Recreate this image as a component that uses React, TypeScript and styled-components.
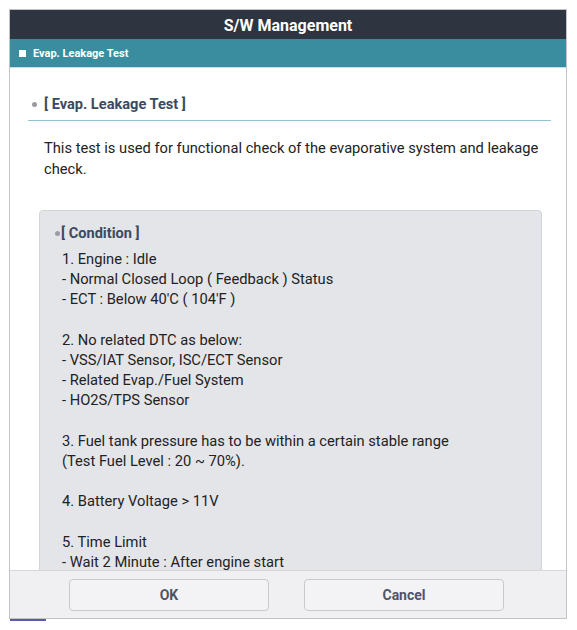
import React from 'react';
import styled, {createGlobalStyle} from 'styled-components';

const GlobalStyle = createGlobalStyle`
  body {
    margin: 0;
    background: #ffffff;
    font-family: Roboto, "Liberation Sans", Arial, sans-serif;
  }
`;

const Page = styled.div`
  padding: 9px 0 0 9px;
`;

const Dialog = styled.div`
  width: 558px;
  height: 610px;
  display: flex;
  flex-direction: column;
  border: 1px solid #c4c4c8;
  box-sizing: border-box;
  background: #ffffff;
`;

const TitleBar = styled.div`
  height: 29px;
  flex: none;
  background: #2e3440;
  color: #ffffff;
  font-size: 16px;
  font-weight: 700;
  display: flex;
  align-items: center;
  justify-content: center;
  padding-top: 1px;
  box-sizing: border-box;
`;

const SubBar = styled.div`
  height: 29px;
  flex: none;
  background: #3a8d9f;
  border-bottom: 1px solid #bfe0e6;
  box-sizing: border-box;
  color: #ffffff;
  font-size: 11px;
  font-weight: 700;
  display: flex;
  align-items: center;
  gap: 7px;
  padding-left: 9px;
`;

const Square = styled.span`
  width: 7px;
  height: 7px;
  background: #ffffff;
`;

const Body = styled.div`
  flex: 1;
  overflow: hidden;
  padding: 27px 15px 0 18px;
`;

const SectionHead = styled.div`
  display: flex;
  align-items: center;
  gap: 7px;
  padding: 0 0 7px 4px;
  border-bottom: 1.5px solid #8fc4cf;
  color: #3b4a61;
  font-size: 14.6px;
  line-height: 18px;
  font-weight: 700;
`;

const Dot = styled.span<{ $size?: number }>`
  width: ${p => p.$size ?? 5}px;
  height: ${p => p.$size ?? 5}px;
  border-radius: 50%;
  background: #9a9ca2;
  flex: none;
`;

const Description = styled.p`
  margin: 17px 0 0 16px;
  width: 512px;
  font-size: 14.7px;
  line-height: 21px;
  color: #222222;
`;

const ConditionBox = styled.div`
  margin: 30px 0 0 11px;
  width: 503px;
  box-sizing: border-box;
  background: #e4e5e9;
  border: 1px solid #d3d4d8;
  border-radius: 4px;
  padding: 13px 10px 30px 22px;
`;

const ConditionHead = styled.div`
  display: flex;
  align-items: center;
  gap: 1px;
  margin-left: -7px;
  color: #3b4a61;
  font-size: 14.6px;
  line-height: 18px;
  font-weight: 700;
  margin-bottom: 7px;
`;

const Line = styled.div`
  font-size: 14.7px;
  line-height: 20.2px;
  min-height: 20.2px;
  color: #222222;
`;

const Footer = styled.div`
  height: 48px;
  flex: none;
  background: #f0f0f2;
  border-top: 1px solid #d6d6da;
  box-sizing: border-box;
  display: flex;
  align-items: center;
  padding-left: 59px;
  gap: 35px;
`;

const Button = styled.button`
  width: 200px;
  height: 32px;
  background: #f3f3f5;
  border: 1px solid #c9c9cd;
  border-radius: 4px;
  color: #4f5566;
  font-family: Roboto, "Liberation Sans", Arial, sans-serif;
  font-size: 14px;
  font-weight: 700;
  cursor: pointer;
`;

const Underbar = styled.div`
  width: 36px;
  height: 2px;
  margin-left: 1px;
  background: #5a5aa6;
`;

const conditions = [
    '1. Engine : Idle',
    '- Normal Closed Loop ( Feedback ) Status',
    '- ECT : Below 40\'C ( 104\'F )',
    '',
    '2. No related DTC as below:',
    '- VSS/IAT Sensor, ISC/ECT Sensor',
    '- Related Evap./Fuel System',
    '- HO2S/TPS Sensor',
    '',
    '3. Fuel tank pressure has to be within a certain stable range',
    '(Test Fuel Level : 20 ~ 70%).',
    '',
    '4. Battery Voltage > 11V',
    '',
    '5. Time Limit',
    '- Wait 2 Minute : After engine start',
];

const App: React.FunctionComponent = () => {
    return (
        <Page>
            <GlobalStyle/>
            <Dialog>
                <TitleBar>S/W Management</TitleBar>
                <SubBar>
                    <Square/>
                    Evap. Leakage Test
                </SubBar>
                <Body>
                    <SectionHead>
                        <Dot/>
                        [ Evap. Leakage Test ]
                    </SectionHead>
                    <Description>
                        This test is used for functional check of the evaporative system and leakage check.
                    </Description>
                    <ConditionBox>
                        <ConditionHead>
                            <Dot/>
                            [ Condition ]
                        </ConditionHead>
                        {conditions.map((text, i) => (
                            <Line key={i}>{text}</Line>
                        ))}
                    </ConditionBox>
                </Body>
                <Footer>
                    <Button>OK</Button>
                    <Button>Cancel</Button>
                </Footer>
            </Dialog>
            <Underbar/>
        </Page>
    );
};

export default App;
